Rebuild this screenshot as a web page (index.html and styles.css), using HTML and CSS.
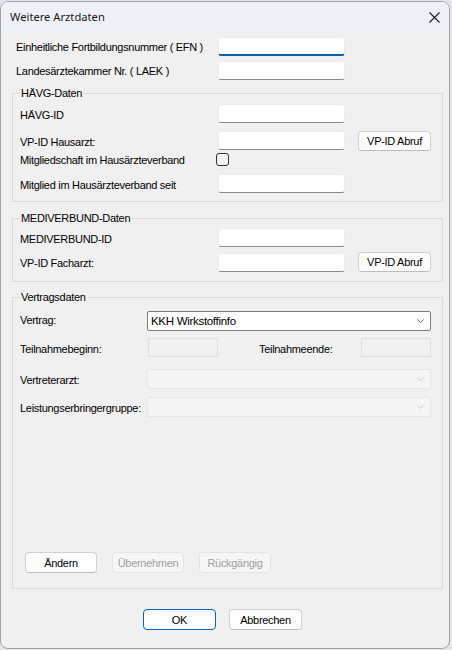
FILE: index.html
```html
<!DOCTYPE html>
<html lang="de">
<head>
    <meta charset="UTF-8">
    <title>Weitere Arztdaten</title>
    <link rel="stylesheet" href="styles.css">
</head>
<body>
    <div class="window">
        <div class="titlebar">
            <span class="title">Weitere Arztdaten</span>
            <svg class="close" width="11" height="11" viewBox="0 0 11 11">
                <path d="M0.5 0.5 L10.5 10.5 M10.5 0.5 L0.5 10.5" stroke="#1a1a1a" stroke-width="1.1" fill="none"/>
            </svg>
        </div>

        <div class="content">
            <div class="top">
                <div class="row">
                    <label class="lbl">Einheitliche Fortbildungsnummer ( EFN )</label>
                    <input type="text" class="edit focused">
                </div>
                <div class="row row-2">
                    <label class="lbl">Landesärztekammer Nr. ( LAEK )</label>
                    <input type="text" class="edit">
                </div>
            </div>

            <fieldset class="group group-haevg">
                <legend>HÄVG-Daten</legend>
                <div class="row">
                    <label class="lbl">HÄVG-ID</label>
                    <input type="text" class="edit">
                </div>
                <div class="row row-btn gap-7">
                    <label class="lbl">VP-ID Hausarzt:</label>
                    <input type="text" class="edit">
                    <button class="btn abruf">VP-ID Abruf</button>
                </div>
                <div class="row row-check">
                    <label class="lbl">Mitgliedschaft im Hausärzteverband</label>
                    <span class="check"></span>
                </div>
                <div class="row gap-8">
                    <label class="lbl">Mitglied im Hausärzteverband seit</label>
                    <input type="text" class="edit">
                </div>
            </fieldset>

            <fieldset class="group group-medi">
                <legend>MEDIVERBUND-Daten</legend>
                <div class="row">
                    <label class="lbl">MEDIVERBUND-ID</label>
                    <input type="text" class="edit">
                </div>
                <div class="row row-btn gap-5">
                    <label class="lbl">VP-ID Facharzt:</label>
                    <input type="text" class="edit">
                    <button class="btn abruf">VP-ID Abruf</button>
                </div>
            </fieldset>

            <fieldset class="group group-vertrag">
                <legend>Vertragsdaten</legend>
                <div class="vertrag-body">
                    <div class="row row-combo">
                        <label class="lbl lbl-short lbl-high">Vertrag:</label>
                        <div class="combo">
                            <span>KKH Wirkstoffinfo</span>
                            <svg width="7" height="4" viewBox="0 0 7 4"><path d="M0.5 0.5 L3.5 3.5 L6.5 0.5" stroke="#555" stroke-width="0.9" fill="none"/></svg>
                        </div>
                    </div>
                    <div class="row row-dates">
                        <label class="lbl lbl-short">Teilnahmebeginn:</label>
                        <span class="datebox first"></span>
                        <label class="lbl-end">Teilnahmeende:</label>
                        <span class="datebox"></span>
                    </div>
                    <div class="row row-combo gap-12">
                        <label class="lbl lbl-short">Vertreterarzt:</label>
                        <div class="combo disabled">
                            <span></span>
                            <svg width="7" height="4" viewBox="0 0 7 4"><path d="M0.5 0.5 L3.5 3.5 L6.5 0.5" stroke="#c6c6c6" stroke-width="0.9" fill="none"/></svg>
                        </div>
                    </div>
                    <div class="row row-combo gap-8">
                        <label class="lbl lbl-short">Leistungserbringergruppe:</label>
                        <div class="combo disabled">
                            <span></span>
                            <svg width="7" height="4" viewBox="0 0 7 4"><path d="M0.5 0.5 L3.5 3.5 L6.5 0.5" stroke="#c6c6c6" stroke-width="0.9" fill="none"/></svg>
                        </div>
                    </div>

                    <div class="actions">
                        <button class="btn">Ändern</button>
                        <button class="btn" disabled>Übernehmen</button>
                        <button class="btn" disabled>Rückgängig</button>
                    </div>
                </div>
            </fieldset>

            <div class="footer">
                <button class="btn default">OK</button>
                <button class="btn">Abbrechen</button>
            </div>
        </div>
    </div>
</body>
</html>
```

FILE: styles.css
```css
body {
    margin: 0;
    padding: 0;
    background-color: #e2e6ec;
    font-family: "Liberation Sans", Arial, sans-serif;
    font-size: 11px;
    letter-spacing: -0.3px;
    color: #000;
}

.window {
    margin-top: 1px;
    width: 450px;
    height: 648px;
    box-sizing: border-box;
    background-color: #f0f0f0;
    border: 1px solid #a3a3a3;
    border-radius: 8px;
    overflow: hidden;
    display: flex;
    flex-direction: column;
}

.titlebar {
    height: 29px;
    flex-shrink: 0;
    background-color: #eef2f8;
    display: flex;
    align-items: center;
    justify-content: space-between;
    padding: 0 8px 0 9px;
}
.title {
    font-family: "Noto Sans", "Open Sans", sans-serif;
    font-size: 11.2px;
    letter-spacing: 0;
    color: #1a1a1a;
}
.close {
    margin-right: 1px;
    margin-top: 1px;
}

.content {
    flex: 1;
}

/* rows: label column + field */
.row {
    display: flex;
    align-items: center;
}
.lbl {
    width: 198px;
    flex-shrink: 0;
    padding-top: 2px;
    white-space: nowrap;
}
.gap-5 { margin-top: 5px; }
.gap-7 { margin-top: 7px; }
.gap-8 { margin-top: 8px; }
.gap-12 { margin-top: 12px; }

.top {
    padding: 6px 0 0 15px;
}
.top .lbl {
    width: 202px;
    padding-top: 0;
}
.top .row-2 {
    margin-top: 5px;
}

.edit {
    width: 127px;
    height: 19px;
    box-sizing: border-box;
    margin: 0;
    padding: 0 3px;
    background-color: #fff;
    border: 1px solid #ececec;
    border-bottom-color: #8b8b8b;
    border-radius: 3px;
    outline: none;
    font: inherit;
}
.edit.focused {
    border-bottom: 2px solid #005fb8;
}

.btn {
    width: 73px;
    height: 21px;
    box-sizing: border-box;
    padding: 0;
    background-color: #fdfdfd;
    border: 1px solid #d0d0d0;
    border-bottom-color: #bdbdbd;
    border-radius: 4px;
    font-family: "Liberation Sans", Arial, sans-serif;
    font-size: 11px;
    letter-spacing: -0.3px;
    color: #000;
}
.btn:disabled {
    background-color: #f6f6f6;
    border-color: #e4e4e4;
    color: #a0a0a0;
}
.btn.default {
    border: 1px solid #0067c0;
}

/* group boxes */
.group {
    margin: 0 6px 0 11px;
    padding: 0 7px;
    border: 1px solid #dadada;
    min-width: 0;
}
.group legend {
    padding: 0 2px 0 1px;
    line-height: 14px;
    height: 14px;
}

.group-haevg {
    margin-top: 6px;
    padding-top: 4px;
    padding-bottom: 8px;
}
.group-haevg .row-btn {
    height: 21px;
}
.abruf {
    margin-left: 13px;
    height: 20px;
}
.row-check {
    margin-top: 2px;
    height: 13px;
}
.row-check .lbl {
    padding-top: 0;
}
.check {
    width: 13px;
    height: 13px;
    box-sizing: border-box;
    margin-left: -2px;
    border: 1px solid #333;
    border-radius: 3px;
    background-color: #f7f7f7;
}

.group-medi {
    margin-top: 9px;
    padding-top: 3px;
    padding-bottom: 9px;
}
.group-medi .row-btn {
    height: 20px;
}

.group-vertrag {
    margin-top: 8px;
    padding-bottom: 0;
}
.vertrag-body {
    height: 284px;
    box-sizing: border-box;
    padding: 7px 0 15px;
    display: flex;
    flex-direction: column;
}
.lbl-short {
    width: 127px;
}
.lbl-high {
    align-self: flex-start;
    padding-top: 3px;
}

.combo {
    width: 284px;
    height: 20px;
    box-sizing: border-box;
    display: flex;
    align-items: center;
    justify-content: space-between;
    padding: 0 6px 0 3px;
    background-color: #fff;
    border: 1px solid #7a7a7a;
    border-radius: 2px;
    font-size: 11.5px;
}
.combo.disabled {
    background-color: #f5f5f5;
    border-color: #e6e6e6;
}

.row-dates {
    margin-top: 7px;
    height: 19px;
}
.datebox {
    width: 70px;
    height: 19px;
    box-sizing: border-box;
    border: 1px solid #dedede;
    background-color: #f0f0f0;
}
.datebox.first {
    margin-left: 1px;
}
.lbl-end {
    width: 102px;
    margin-left: 41px;
    padding-top: 2px;
}

.actions {
    margin-top: auto;
    padding-left: 5px;
    display: flex;
    gap: 15px;
}
.actions .btn {
    width: 72px;
}

.footer {
    margin-top: 20px;
    padding-left: 142px;
    display: flex;
    gap: 13px;
}
```
